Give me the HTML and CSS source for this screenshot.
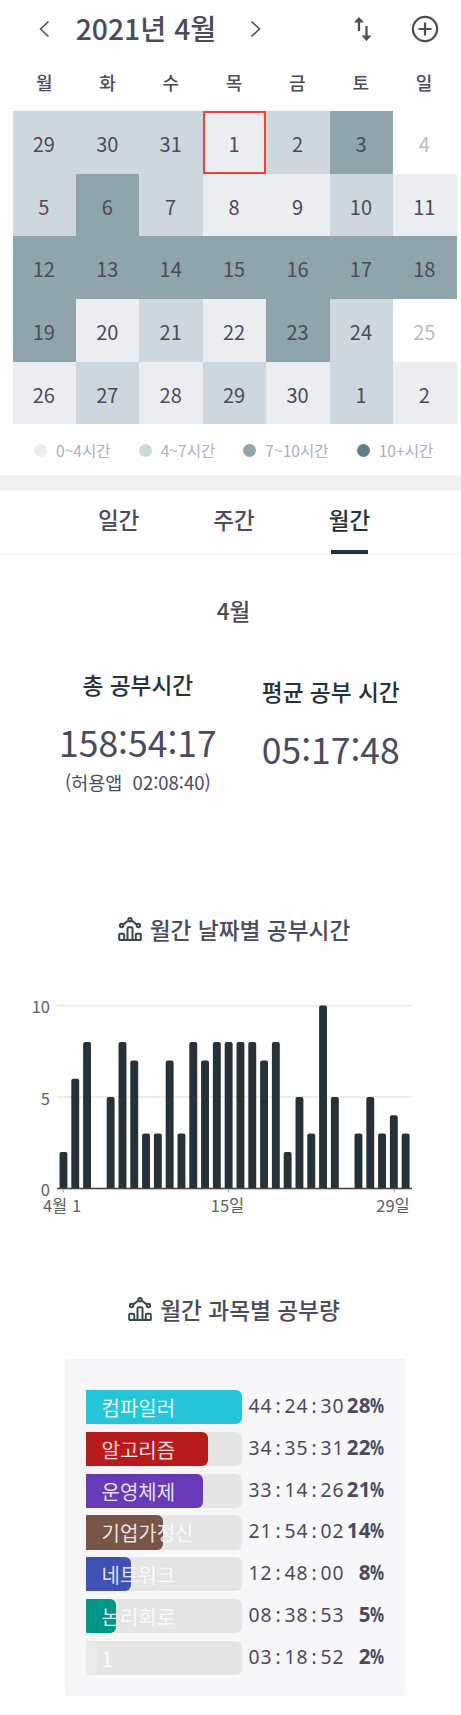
FILE: index.html
```html
<!DOCTYPE html>
<html lang="ko">
  <head>
    <meta charset="UTF-8" />
    <meta name="viewport" content="width=device-width, initial-scale=1.0" />
    <title>월간 공부시간</title>
    <link rel="stylesheet" href="styles.css" />
  </head>
  <body>
    <header class="header">
      <svg class="arrow" width="11" height="18" viewBox="0 0 11 18">
        <path d="M9.5 1.5L1.5 9l8 7.5" />
      </svg>
      <h1>2021년 4월</h1>
      <svg class="arrow" width="11" height="18" viewBox="0 0 11 18">
        <path d="M1.5 1.5L9.5 9l-8 7.5" />
      </svg>
      <svg class="sort" width="20" height="24" viewBox="0 0 20 24">
        <path class="line" d="M6 14V4M13.5 9v11" />
        <path class="head" d="M6 0l5 5.5H1zM13.5 24l-5-5.5h10z" />
      </svg>
      <svg class="add" width="28" height="28" viewBox="0 0 28 28">
        <circle cx="14" cy="14" r="12.1" />
        <path d="M14 7.5v13M7.5 14h13" />
      </svg>
    </header>

    <div class="calendar weekdays">
      <span>월</span><span>화</span><span>수</span><span>목</span>
      <span>금</span><span>토</span><span>일</span>
    </div>
    <div class="calendar days">
      <span class="l2">29</span>
      <span class="l2">30</span>
      <span class="l2">31</span>
      <span class="l1 today">1</span>
      <span class="l2">2</span>
      <span class="l3">3</span>
      <span class="none">4</span>
      <span class="l2">5</span>
      <span class="l3">6</span>
      <span class="l2">7</span>
      <span class="l1">8</span>
      <span class="l1">9</span>
      <span class="l2">10</span>
      <span class="l1">11</span>
      <span class="l3">12</span>
      <span class="l3">13</span>
      <span class="l3">14</span>
      <span class="l3">15</span>
      <span class="l3">16</span>
      <span class="l3">17</span>
      <span class="l3">18</span>
      <span class="l3">19</span>
      <span class="l1">20</span>
      <span class="l2">21</span>
      <span class="l1">22</span>
      <span class="l3">23</span>
      <span class="l2">24</span>
      <span class="none">25</span>
      <span class="l1">26</span>
      <span class="l2">27</span>
      <span class="l1">28</span>
      <span class="l2">29</span>
      <span class="l1">30</span>
      <span class="l2">1</span>
      <span class="l1">2</span>
    </div>
    <div class="legend">
      <span><i class="l1"></i>0~4시간</span>
      <span><i class="dot2"></i>4~7시간</span>
      <span><i class="l3"></i>7~10시간</span>
      <span><i class="l4"></i>10+시간</span>
    </div>

    <nav class="tabs">
      <a>일간</a>
      <a>주간</a>
      <a class="active">월간</a>
    </nav>

    <h2 class="month">4월</h2>
    <div class="summary">
      <div class="total">
        <h3>총 공부시간</h3>
        <p class="time">158:54:17</p>
        <p class="allowed">(허용앱&nbsp; 02:08:40)</p>
      </div>
      <div class="average">
        <h3>평균 공부 시간</h3>
        <p class="time">05:17:48</p>
      </div>
    </div>

    <h2 class="title">
      <svg width="24" height="24" viewBox="0 0 24 24">
        <path d="M1 23h22.2M1.2 23v-5.2q0-1 1-1h3q1 0 1 1V23M9.5 23V11.5q0-1.2 1.2-1.2h2.6q1.2 0 1.2 1.2V23M17.8 23v-5.2q0-1 1-1h3q1 0 1 1V23" />
        <path d="M5.3 7.4l4.8-3.6M18.7 7.4l-4.8-3.6" />
        <circle cx="12" cy="2.7" r="1.7" />
        <circle cx="3.6" cy="8.5" r="1.7" />
        <circle cx="20.4" cy="8.5" r="1.7" />
      </svg>
      월간 날짜별 공부시간
    </h2>
    <svg class="chart" width="461" height="240" viewBox="0 0 461 240">
      <path class="grid" d="M57 25.5h355M57 117h355" />
      <g class="bars"></g>
      <path class="axis" d="M57 208.5h355" />
      <path class="tick" d="M63.3 209v3.5M228.6 209v3.5M394.2 209v3.5" />
      <g class="y-labels">
        <text x="50" y="33">10</text>
        <text x="50" y="125">5</text>
        <text x="50" y="216">0</text>
      </g>
      <g class="x-labels">
        <text x="62" y="232">4월 1</text>
        <text x="227.5" y="232">15일</text>
        <text x="393" y="232">29일</text>
      </g>
    </svg>

    <h2 class="title subjects-title">
      <svg width="24" height="24" viewBox="0 0 24 24">
        <path d="M1 23h22.2M1.2 23v-5.2q0-1 1-1h3q1 0 1 1V23M9.5 23V11.5q0-1.2 1.2-1.2h2.6q1.2 0 1.2 1.2V23M17.8 23v-5.2q0-1 1-1h3q1 0 1 1V23" />
        <path d="M5.3 7.4l4.8-3.6M18.7 7.4l-4.8-3.6" />
        <circle cx="12" cy="2.7" r="1.7" />
        <circle cx="3.6" cy="8.5" r="1.7" />
        <circle cx="20.4" cy="8.5" r="1.7" />
      </svg>
      월간 과목별 공부량
    </h2>
    <div class="subjects"></div>

    <script src="script.js"></script>
  </body>
</html>
```
FILE: styles.css
```css
* {
  margin: 0;
  padding: 0;
  box-sizing: border-box;
}
body {
  width: 461px;
  height: 1715px;
  overflow: hidden;
  background-color: #fefefe;
  color: #4c4b5b;
  font-family: "Noto Sans CJK KR", sans-serif;
}
h1,
h2,
h3 {
  font-weight: 500;
}
svg {
  fill: none;
  flex: none;
}

.header {
  display: flex;
  align-items: center;
  height: 60px;
  padding: 0 22px 3px 38.5px;
}
.header h1 {
  width: 200px;
  padding: 0 7px 1px 0;
  font-size: 28.3px;
  line-height: 48px;
  text-align: center;
}
.arrow path {
  stroke: #4c4b5b;
  stroke-width: 1.5;
}
.sort {
  margin-left: 92px;
}
.sort .line {
  stroke: #4c4b5b;
  stroke-width: 2.2;
}
.sort .head {
  fill: #4c4b5b;
}
.add {
  margin-left: auto;
  stroke: #4c4b5b;
  stroke-width: 2.2;
}

.calendar {
  display: grid;
  grid-template-columns: repeat(7, 1fr);
  width: 444px;
  margin-left: 12.6px;
  text-align: center;
}
.weekdays {
  height: 51px;
  padding-right: 1px;
  font-size: 18px;
  font-weight: 500;
  line-height: 44px;
}
.days {
  grid-auto-rows: 62.7px;
  font-size: 20px;
  line-height: 65px;
}
.days span {
  padding-right: 1px;
}
.l1 {
  background-color: #eaeef1;
}
.l2 {
  background-color: #cfd7de;
}
.dot2 {
  background-color: #cfd8dc;
}
.l3 {
  background-color: #90a4ac;
}
.l4 {
  background-color: #607d89;
}
.days .none {
  color: #bdbdbd;
}
.days .today {
  border: 2px solid #f44336;
  line-height: 61px;
}

.legend {
  display: flex;
  gap: 28px;
  height: 50.5px;
  padding: 1px 0 0 34px;
  align-items: center;
  color: #a9b1c1;
  font-size: 15.6px;
}
.legend span {
  display: flex;
  align-items: center;
}
.legend i {
  width: 13px;
  height: 13px;
  margin-right: 9px;
  border-radius: 50%;
}

.tabs {
  display: flex;
  justify-content: center;
  gap: 74px;
  height: 80px;
  border-top: 15px solid #f0f0f3;
  border-bottom: 1px solid #f3f3f4;
  font-size: 22.5px;
  font-weight: 500;
  line-height: 59px;
  padding-left: 7px;
}
.tabs .active {
  color: #263238;
  position: relative;
}
.tabs .active::after {
  content: "";
  position: absolute;
  left: 2px;
  bottom: 0;
  width: 37px;
  height: 4px;
  background-color: #263238;
}

.month {
  margin-top: 35px;
  padding-left: 6px;
  font-size: 22.5px;
  line-height: 40px;
  text-align: center;
}
.summary {
  display: flex;
  gap: 45px;
  height: 245px;
  margin-top: 35px;
  padding-left: 59px;
  text-align: center;
}
.summary h3 {
  color: #263238;
  font-size: 22.7px;
  line-height: 40px;
}
.average {
  padding-top: 7px;
}
.time {
  margin-top: 12px;
  font-size: 35.5px;
  line-height: 50px;
}
.allowed {
  margin-top: 1px;
  font-size: 18.5px;
  line-height: 28px;
}

.title {
  display: flex;
  justify-content: center;
  align-items: center;
  gap: 8px;
  height: 40px;
  padding: 0 0 1px 7px;
  font-size: 22.7px;
}
.title svg {
  stroke: #37474f;
  stroke-width: 2;
}

.chart {
  display: block;
  margin-top: 30px;
}
.grid {
  stroke: #e6e6e6;
  stroke-width: 1.7;
}
.bars {
  fill: #263238;
}
.axis {
  stroke: #424242;
  stroke-width: 1.3;
}
.tick {
  stroke: #9e9e9e;
}
.chart text {
  fill: #616161;
  font-size: 16.5px;
}
.y-labels {
  text-anchor: end;
}
.x-labels {
  text-anchor: middle;
}

.subjects-title {
  margin-top: 70px;
}
.subjects {
  width: 340px;
  height: 337px;
  margin: 29px 0 0 64.5px;
  padding: 30px 21px 0 20px;
  border: 1px solid #f3f3f5;
  background-color: #f7f7fa;
}
.subject {
  display: flex;
  height: 34.3px;
  margin-bottom: 7.5px;
}
.track {
  position: relative;
  width: 156.7px;
  height: 34.3px;
  border-radius: 0 6px 6px 0;
  background-color: #e5e5e5;
}
.fill {
  height: 100%;
  border-radius: 0 6px 6px 0;
}
.name {
  position: absolute;
  left: 16px;
  top: 0;
  color: rgba(255, 255, 255, 0.85);
  font-size: 20px;
  line-height: 35px;
}
.spent,
.percent {
  display: flex;
  font-family: "Noto Sans", sans-serif;
  font-size: 20.5px;
  line-height: 31px;
}
.spent {
  margin-left: 5.5px;
}
.percent {
  flex: 1;
  justify-content: flex-end;
  font-weight: 700;
}
.spent span,
.percent span {
  display: flex;
  justify-content: center;
  width: 12px;
}
.spent span {
  transform: scaleX(0.94);
}
.percent .sign {
  transform: scaleX(0.76);
}
```
FILE: script.js
```javascript
let hours = [2, 6, 8, 0, 5, 8, 7, 3, 3, 7, 3, 8, 7, 8, 8, 8, 8, 7, 8, 2, 5, 3, 10, 5, 0, 3, 5, 3, 4, 3];
let bars = "";
hours.forEach(function (hour, index) {
  if (hour == 0) return;
  let x = 59.5 + index * 11.8;
  let y = 208.5 - hour * 18.3;
  bars += `<path d="M${x} 208.5V${y + 2}q0-2 2-2h3.9q2 0 2 2V208.5z" />`;
});
document.getElementsByClassName("bars")[0].innerHTML = bars;

let subjects = [
  { name: "컴파일러", time: "44:24:30", percent: "28%", width: 100, color: "#26c6da" },
  { name: "알고리즘", time: "34:35:31", percent: "22%", width: 78, color: "#b71c1c" },
  { name: "운영체제", time: "33:14:26", percent: "21%", width: 75, color: "#673ab7" },
  { name: "기업가정신", time: "21:54:02", percent: "14%", width: 49.6, color: "#795548" },
  { name: "네트워크", time: "12:48:00", percent: "8%", width: 29, color: "#3f51b5" },
  { name: "논리회로", time: "08:38:53", percent: "5%", width: 19.7, color: "#009688" },
  { name: "1", time: "03:18:52", percent: "2%", width: 7.5, color: "#eaeaea" },
];

// one fixed-width cell for each character
function cells(text) {
  return text
    .split("")
    .map(function (char) {
      return `<span class="${char == "%" ? "sign" : "digit"}">${char}</span>`;
    })
    .join("");
}

let rows = "";
subjects.forEach(function (subject) {
  rows += `<div class="subject">
    <div class="track">
      <div class="fill" style="width: ${subject.width}%; background-color: ${subject.color}"></div>
      <span class="name">${subject.name}</span>
    </div>
    <div class="spent">${cells(subject.time)}</div>
    <div class="percent">${cells(subject.percent)}</div>
  </div>`;
});
document.getElementsByClassName("subjects")[0].innerHTML = rows;
```
